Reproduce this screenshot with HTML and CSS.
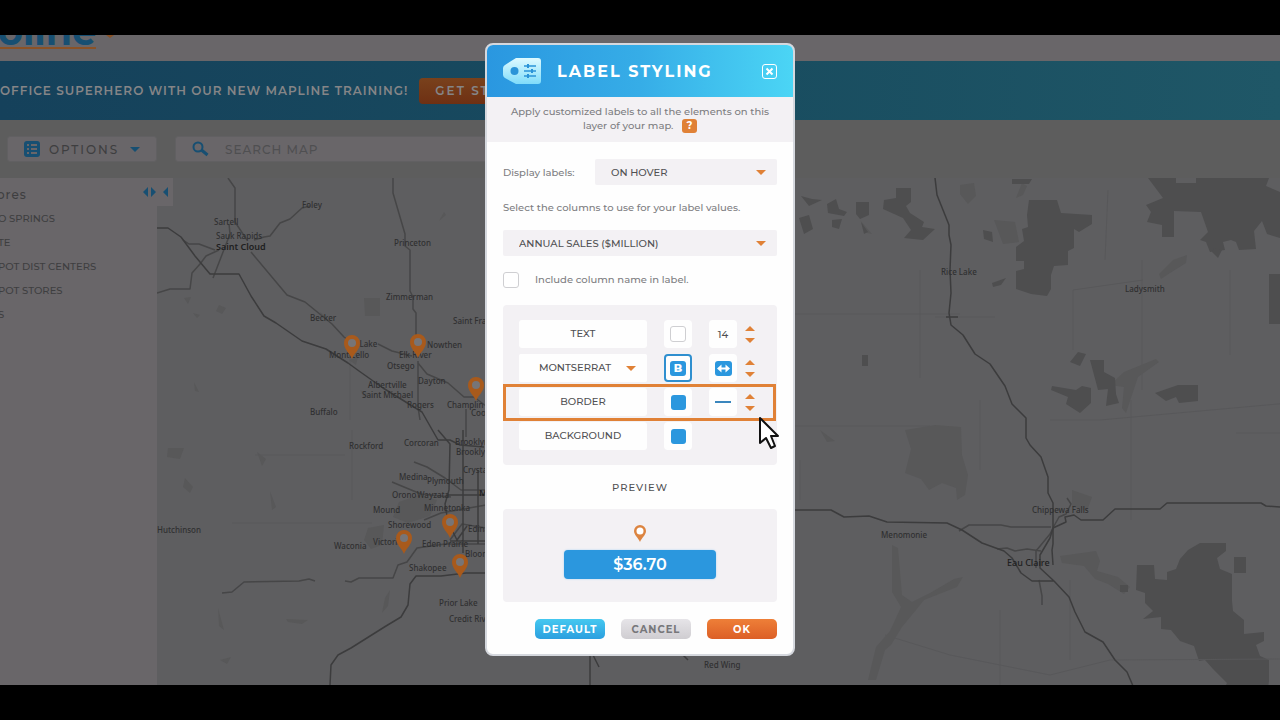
FILE: index.html
```
<!DOCTYPE html>
<html lang="en">
<head>
<meta charset="utf-8">
<meta name="viewport" content="width=device-width, initial-scale=1">
<title>Mapline - Label Styling</title>
<link rel="stylesheet" href="styles.css">
</head>
<body>
<div class="app">
	<header class="top">
		<div class="logo">oline</div>
		<span class="top-caret"></span>
	</header>

	<div class="banner">
		<span class="banner-text">OFFICE SUPERHERO WITH OUR NEW MAPLINE TRAINING!</span>
		<button type="button" class="get-started">GET STARTED</button>
	</div>

	<div class="toolbar">
		<button type="button" class="options">
			<svg width="16" height="16" viewBox="0 0 16 16"><rect width="16" height="16" rx="3" fill="#174f72"/><path d="M3 4h2M3 8h2M3 12h2M7 4h6M7 8h6M7 12h6" stroke="#696669" stroke-width="2"/></svg>
			<span>OPTIONS</span>
			<i class="caret caret-blue"></i>
		</button>
		<label class="search">
			<svg width="17" height="16" viewBox="0 0 17 16" fill="none" stroke="#174f72"><circle cx="6" cy="6" r="4.5" stroke-width="2"/><path d="M9.5 9L15.500 14" stroke-width="3"/></svg>
			<input type="text" placeholder="SEARCH MAP" aria-label="Search map">
		</label>
	</div>

	<div class="content">
		<aside class="sidebar">
			<h2>ores</h2>
			<ul>
				<li>O SPRINGS</li>
				<li>TE</li>
				<li>POT DIST CENTERS</li>
				<li>POT STORES</li>
				<li>S</li>
			</ul>
			<div class="sidebar-tab">
				<svg width="26" height="10" viewBox="0 0 26 10" fill="#174f72"><path d="M5 0v10L0 5zM8 0v10l5-5zM25 0v10l-5-5z"/></svg>
			</div>
		</aside>

		<svg class="map" viewBox="157 178 1123 507" preserveAspectRatio="xMinYMin slice" role="img" aria-label="Map">
			<defs>
				<g id="pin"><path d="M0 1C-2-5-8-8-8-15a8 8 0 0 1 16 0C8-8 2-5 0 1z" fill="#a85a1c"/><circle cy="-15" r="4" fill="#777577"/></g>
			</defs>
			<rect x="157" y="178" width="1123" height="507" fill="#5e5e60"/>

			<!-- lakes and parks -->
			<g fill="#585859">
				<path d="M364 298h16v18h-15zM219 305l7 3-4 6-6-3zM349 360l9-3-2 8zM168 448h16l-4 11-13-2zM257 452l9 7-4 7zM185 478l8 9-3 6-7-6zM270 491l6 16-4 3zM399 502l20-7 18 5-7 16-22 7-15-6zM368 528l16-3-2 20-11 4-7-9zM390 590l-2 16-6 7 3-15zM218 608l6 22-5-4zM286 619l22 1-6 4-14-2zM220 660l11-3-4 7zM194 382l5 10-4-1z"/>
				<path d="M905 430l30-5 26 2 1 28 6 20-3 20-8 5-1-12-14-5-13 7-8-11-16-6 6-24z"/>
				<path d="M892 545l6 3 4 47 10 7 18-9 24-14 9-2-6 10-33 13-8 10-14 17-11 18-6 5-9 30h-8l8-33 14-16 11-24-9-15z"/>
				<path d="M1060 556l36-5 4 10-3 10 21 6 12 10-6 7-16-10-13-5-11-13-22-3zM1072 490l20 7-5 14-15-4zM960 185l14-2 2 13-8 8-8-10zM1022 183l5 3-4 9-7 3zM1159 274l14-14 14-5-1 8-16 10-9 6zM1124 372l32-13 3 3-21 15-12 36-4-5 2-21-14-2zM994 220l21 2 4 20-16 2zM860 220l12 14-5-1zM820 430l15 11-8 1z"/>
				<path d="M360 390l9 4-5 4zM320 312l5 4-3 3zM444 212l-5 9 7-6zM184 298l7-1-3 7zM193 313l7 2-3 3z"/>
			</g>
			<g fill="#4e4e4f">
				<path d="M884 200l12-2v-10h15v14l-5 4 4 7 14 9-2 5 13 2-12 11-19-2 7-8-8-12-20-9zM856 202h13v13l-9 4-4-5zM827 204l9-5 3 10 8 3-3 4-16-3zM799 218l10-3 4 14-9 5zM832 220l10-1-3 10-7-2zM801 196l11 3 10 1-13 6zM861 222l7 10-4 2zM983 230l9 2 1 10-9-3z"/>
				<path d="M1029 200h28l4 13 31 2v9l-13 8-5-3v19l-6 3v14l-14 1-3 9v14l-4 7-16-2-15-5v-18l8-2v-8h-8v-14l8-6-2-12 6-2-1-12z"/>
				<path d="M1012 179h20l-3 5h-17zM992 283l14-5-5 7-8 2z"/>
				<path d="M1148 178h28v5h20v-5h73l-3 8 14 6v46l-13-4-5-13-8 10 2 18-17 1-3-8-5-2-8 2 2 8-15 2-4-10-6-2 8-8-7-20-27-1v26h-12v-12l-15-3 4-10-5-7 17-7z"/>
				<path d="M1214 248l8 2-4 8-6-6zM1269 274h11v50h-11z"/>
				<path d="M1070 362l8-10 8 2-6 12zM1090 360h14v12l11 6 1 16 3 9-13 3 2-17-10 1zM1052 386l24 4 6-4 9 2v15l-11 10-14-9 2-7-17-7zM1155 393l23-8h20v16l-19 2-3-6-10 4zM862 355h6v11h-6zM1234 557h12v16h-12zM1120 585h8v7h-8z"/>
				<path d="M1200 543h26v8l-9 7 3 11 12 5v27l1 10 11 9v14l20-2v9l-8 4 4 11 9 4v21l-2 14h-46l6-12-14-14-8-9-6 1-5-15-14-5-9-11-10-1v-12l-18 2 10-8-8-8v-10l-9-3 1-25h17l1 14 12 1v-8l9-3 4-10 8-9z"/>
			</g>
			<!-- minor roads -->
			<g fill="none" stroke="#58585a">
				<path d="M352 430V500M232 523h140M345 455h-90M350 340v80M790 314h170M935 317h60M920 378V270M1108 190l-3 70M1050 420h50l200-18M1142 260v130M1230 270v85M1073 350V290l70-10M790 426h140M980 400v70M1131 520V400M1236 433h44M800 460v40M885 635l65 20 100 20 60-15 170-1M1000 610v75M1070 580v80"/>
			</g>
			<!-- roads -->
			<g fill="none" stroke="#464647" stroke-width="1.500" stroke-linejoin="round">
				<path d="M228 178l7 10v34l12 18M254 240l10-3 6-1 10-13 10-4 12-11 8-2M213 278l17-44-1-10M157 293l13-4h20l2-16 8-9 6-8 13-6M183 240l6 4h10l16 6"/>
				<path d="M251 252l36 43 18 7 27 22 12 13 10 7M378 344l14 7 20 5M393 178v15l12 41v12l5 4v41l3 6v12l3 4v35M418 361v46l2 13M418 363l9 11 21 9 16 14h10l12 9M466 409v28"/>
				<path d="M222 593l10-1 12-10 55-1 10-2 6 2M345 581l6 1 8-4h34l5-13 9-3 10-14 28-4h43M414 462l13 5 18 11 16 12h25M392 482l12 5 17 7 30 3"/>
				<path d="M424 520l17-7 28-5 17-3M450 540l12-16 24 4M959 531l10-6h32l10 2h40M1067 498l4 6-5 10-7 3-5 9-4 8-14 17v17M997 549l10-1 8 3 12-2 14 2M1039 580l3 16v9"/>
			</g>
			<g fill="none" stroke="#3c3c3d" stroke-width="1.500" stroke-linejoin="round">
				<path d="M157 228h11l13 9 14 19 15 18h29l12 22 13 20 12 7 26 18 24 8 22 14 11 8 24 17 39 24 8 14 8 14h12l10 5 24 2"/>
				<path d="M438 430l12 14-1 46-4 14 3 18 9 18 10-14M463 430v123M478 470v74M446 495h40M330 685l1-20 7-10 13-7 35-22 15-9 7-12 2-21 6-8h25l25-3h20M450 541h36"/>
				<path d="M935 178l2 17 12 30v10l2 10-1 25 1 23-2 20 2 12 12 10 12 19 15 10 15 22 7 18 14 14v20l4 7 11 12 7 20v16l5 10v41l-1 6 1 15M946 317h12"/>
				<path d="M795 510h36l13 7 25-1 18 6 60 1 15 7 20 13 22 8 8 7 9 15 11 8h22M1053 528l13-6-1-5 9-2 7 5h22l12-11h45l7-6h94l5 3 14 1M1053 528l-3 10-10 17v13l14 13 15 16 6 15 10 20 18 10 12 18 12 12 6 14"/>
				<path d="M590 655v30M593 655l6 12M683 655l5 5"/>
			</g>
			<!-- towns -->
			<g class="towns">
				<text x="302" y="208">Foley</text><text x="214" y="225">Sartell</text><text x="216" y="239">Sauk Rapids</text><text class="city" x="216" y="250">Saint Cloud</text>
				<text x="394" y="246">Princeton</text><text x="386" y="300">Zimmerman</text><text x="310" y="321">Becker</text><text x="453" y="324">Saint Francis</text>
				<text x="345" y="347">Big Lake</text><text x="427" y="348">Nowthen</text><text x="329" y="358">Monticello</text><text x="399" y="358">Elk River</text><text x="387" y="369">Otsego</text><text x="418" y="384">Dayton</text><text x="368" y="388">Albertville</text><text x="362" y="398">Saint Michael</text><text x="407" y="408">Rogers</text><text x="447" y="408">Champlin</text><text x="471" y="416">Coon Rapids</text><text x="310" y="415">Buffalo</text>
				<text x="349" y="449">Rockford</text><text x="404" y="446">Corcoran</text><text x="455" y="445">Brooklyn Park</text><text x="456" y="455">Brooklyn Center</text><text x="463" y="473">Crystal</text><text x="399" y="480">Medina</text><text x="427" y="484">Plymouth</text><text class="city" x="479" y="496">Minneapolis</text><text x="392" y="498">Orono</text><text x="417" y="498">Wayzata</text><text x="373" y="513">Mound</text><text x="424" y="511">Minnetonka</text><text x="388" y="528">Shorewood</text><text x="468" y="532">Edina</text><text x="157" y="533">Hutchinson</text><text x="334" y="549">Waconia</text><text x="373" y="545">Victoria</text><text x="422" y="547">Eden Prairie</text><text x="465" y="557">Bloomington</text><text x="409" y="571">Shakopee</text><text x="439" y="606">Prior Lake</text><text x="449" y="622">Credit River</text><text x="704" y="668">Red Wing</text>
				<text x="941" y="275">Rice Lake</text><text x="1125" y="292">Ladysmith</text><text x="1032" y="513">Chippewa Falls</text><text x="881" y="538">Menomonie</text><text class="city light" x="1007" y="566">Eau Claire</text>
			</g>
			<use href="#pin" x="352" y="358"/><use href="#pin" x="418" y="357"/><use href="#pin" x="476" y="400"/>
			<use href="#pin" x="450" y="537"/><use href="#pin" x="404" y="553"/><use href="#pin" x="460" y="577"/>
		</svg>
	</div>
</div>

<div class="overlay">
<form class="dialog" role="dialog" aria-labelledby="title">
	<div class="dialog-head">
		<svg width="38" height="26" viewBox="0 0 38 26">
			<defs><linearGradient id="tag" x2="0" y2="1"><stop stop-color="#dffaff"/><stop offset="1" stop-color="#7fdcfa"/></linearGradient></defs>
			<path d="M13 0h22a3 3 0 0 1 3 3v20a3 3 0 0 1-3 3H13L2 20a4 4 0 0 1-2-3V10a4 4 0 0 1 2-3z" fill="url(#tag)"/>
			<circle cx="11.500" cy="13" r="4" fill="#2b94d8"/>
			<path d="M21 8h12M21 13h12M21 18h12" stroke="#2b94d8" stroke-width="1.500"/>
			<path d="M25 6v4M29 11v4M25 16v4" stroke="#2b94d8" stroke-width="2"/>
		</svg>
		<h1 id="title">LABEL STYLING</h1>
		<button type="button" class="close" aria-label="Close"><svg width="15" height="15" viewBox="0 0 15 15" fill="none" stroke="#fff"><rect x=".5" y=".5" width="14" height="14" rx="2.500"/><path d="M4.500 4.500l6 6M10.500 4.500l-6 6" stroke-width="2"/></svg></button>
	</div>
	<p class="intro">Apply customized labels to all the elements on this layer of your map. <button type="button" class="help" aria-label="Help">?</button></p>

	<div class="dialog-body">
		<div class="field">
			<label for="show">Display labels:</label>
			<div class="drop">
				<select id="show"><option>ON HOVER</option></select>
				<i class="caret"></i>
			</div>
		</div>
		<label class="hint" for="column">Select the columns to use for your label values.</label>
		<div class="drop">
			<select id="column"><option>ANNUAL SALES ($MILLION)</option></select>
			<i class="caret"></i>
		</div>
		<label class="check"><input type="checkbox"> Include column name in label.</label>

		<div class="panel">
			<div class="row">
				<span class="name">TEXT</span>
				<button type="button" class="cell" aria-label="Text color"><i class="swatch white"></i></button>
				<input type="text" class="cell size" value="14" aria-label="Text size">
				<div class="step"><button type="button" class="up" aria-label="Larger"></button><button type="button" class="down" aria-label="Smaller"></button></div>
			</div>
			<div class="row">
				<div class="drop font">
					<select aria-label="Font"><option>MONTSERRAT</option></select>
					<i class="caret"></i>
				</div>
				<button type="button" class="cell bold" aria-label="Bold"><i class="letter">B</i></button>
				<span class="cell"><svg width="17" height="15" viewBox="0 0 17 15"><rect width="17" height="15" rx="3" fill="#2b97de"/><path d="M2 7.500L6.500 3.500v3h4v-3L15 7.500l-4.500 4v-3h-4v3z" fill="#fff"/></svg></span>
				<div class="step"><button type="button" class="up" aria-label="Wider"></button><button type="button" class="down" aria-label="Narrower"></button></div>
			</div>
			<div class="row marked">
				<span class="name">BORDER</span>
				<button type="button" class="cell" aria-label="Border color"><i class="swatch"></i></button>
				<span class="cell"><i class="line"></i></span>
				<div class="step"><button type="button" class="up" aria-label="Thicker"></button><button type="button" class="down" aria-label="Thinner"></button></div>
				<svg class="cursor" width="22" height="34" viewBox="0 0 22 34"><path d="M2 2v25l6-5 5 10 4-2-4-10h7z" fill="#fff" stroke="#111" stroke-width="2" stroke-linejoin="round"/></svg>
			</div>
			<div class="row">
				<span class="name">BACKGROUND</span>
				<button type="button" class="cell" aria-label="Background color"><i class="swatch"></i></button>
			</div>
		</div>

		<h3>PREVIEW</h3>
		<div class="preview">
			<svg width="12" height="17" viewBox="0 0 12 17"><path d="M6 17C4.500 13 0 10 0 6a6 6 0 0 1 12 0c0 4-4.500 7-6 11z" fill="#dc8440"/><circle cx="6" cy="6" r="3.500" fill="#fff"/></svg>
			<div class="tip">$36.70</div>
		</div>
		<div class="actions">
			<button type="button" class="btn blue">DEFAULT</button>
			<button type="button" class="btn gray">CANCEL</button>
			<button type="submit" class="btn orange">OK</button>
		</div>
	</div>
</form>
</div>
</body>
</html>
```
FILE: styles.css
```
*
{
	box-sizing:border-box;
}
body
{
	margin:0;
	background:#000;
	font-family:Montserrat, Inter, sans-serif;
	font-size:10px;
	font-weight:500;
	color:#505052;
}
button, input, select
{
	font:inherit;
	color:inherit;
	margin:0;
	padding:0;
	border:none;
	background:none;
}
svg
{
	display:block;
}
h1, h2, h3, p, ul
{
	margin:0;
	padding:0;
}

/* page behind the dialog */
.app
{
	height:100vh;
	padding:35px 0;
	display:flex;
	flex-direction:column;
	overflow:hidden;
	color:#3e3e40;
}
.top
{
	flex:none;
	height:26px;
	display:flex;
	align-items:flex-end;
	gap:10px;
	padding-bottom:12px;
	background:#696669;
	overflow:hidden;
}
.logo
{
	margin-left:-2px;
	border-bottom:2px solid #8a5226;
	color:#174f72;
	font-size:38px;
	font-weight:700;
	line-height:30px;
}
.top-caret
{
	align-self:flex-start;
	border:4px solid transparent;
	border-top:3px solid #8a5226;
	border-bottom:none;
}
.banner
{
	flex:none;
	height:59px;
	display:flex;
	align-items:center;
	gap:11px;
	white-space:nowrap;
	background:linear-gradient(90deg, #15415b, #194d60 60%, #1f5767);
	color:#858587;
	font-size:12px;
	font-weight:600;
	letter-spacing:1px;
}
.get-started
{
	height:26px;
	padding:0 16px;
	border-radius:4px;
	background:linear-gradient(#79411c, #6e3013);
	letter-spacing:2px;
}
.toolbar
{
	flex:none;
	height:58px;
	display:flex;
	align-items:center;
	gap:18px;
	padding:0 7px;
	background:#5d5d5d;
}
.options, .search
{
	height:26px;
	display:flex;
	align-items:center;
	padding:0 16px;
	border:1px solid #616062;
	border-radius:3px;
	background:#696669;
}
.options
{
	width:150px;
	gap:9px;
	font-size:12px;
	letter-spacing:2px;
}
.options span
{
	flex:1;
	text-align:left;
}
.search
{
	width:400px;
	gap:16px;
}
.search input
{
	flex:1;
	font-size:12px;
	letter-spacing:1px;
	outline:none;
}
.search input::placeholder
{
	color:#4f4f51;
}
.content
{
	flex:1;
	min-height:0;
	display:flex;
	background:#5e5e60;
}
.sidebar
{
	flex:none;
	position:relative;
	width:157px;
	background:#696669;
}
.sidebar h2
{
	margin-left:-3px;
	padding-top:8px;
	font-size:12px;
	font-weight:500;
	line-height:18px;
	letter-spacing:1px;
}
.sidebar ul
{
	padding-top:3px;
	list-style:none;
}
.sidebar li
{
	margin-left:-2px;
	line-height:24px;
}
.sidebar-tab
{
	position:absolute;
	top:0;
	right:-16px;
	padding:9px 4px;
	background:#696669;
}
.map
{
	flex:1;
	min-width:0;
	height:100%;
}
.towns
{
	font-family:"Noto Sans", sans-serif;
	font-size:8px;
	fill:#303031;
}
.towns .city
{
	font-size:9px;
	font-weight:600;
	fill:#202021;
}
.towns .light
{
	font-weight:500;
}

/* dialog */
.overlay
{
	position:absolute;
	top:0;
	left:0;
	right:0;
	display:flex;
	justify-content:center;
	padding-top:43px;
}
.dialog
{
	width:310px;
	border:2px solid #d5d8de;
	border-radius:8px;
	background:#fefefe;
	overflow:hidden;
}
.dialog-head
{
	height:52px;
	display:flex;
	align-items:center;
	gap:16px;
	padding:0 16px;
	background:linear-gradient(90deg, #2a97e0, #36ade7 50%, #4bd5f5);
	color:#fff;
}
.dialog-head h1
{
	flex:1;
	font-size:16px;
	font-weight:700;
	letter-spacing:2px;
	white-space:nowrap;
}
.intro
{
	padding:8px 16px 9px;
	background:#f3f1f4;
	color:#7d7d81;
	line-height:14px;
	text-align:center;
}
.help
{
	width:15px;
	height:14px;
	margin-left:6px;
	border-radius:3px;
	background:#e08136;
	color:#fff;
	font-weight:700;
	line-height:14px;
}
.dialog-body
{
	padding:17px 16px 15px;
	color:#7d7d81;
}
.field
{
	display:flex;
	align-items:center;
	justify-content:space-between;
}
.field .drop
{
	width:182px;
}
.drop
{
	position:relative;
	height:26px;
}
.drop select
{
	width:100%;
	height:100%;
	padding:0 16px;
	appearance:none;
	border-radius:2px;
	background:#f3f1f4;
	color:#505052;
}
.caret
{
	border:5px solid transparent;
	border-top-color:#e08136;
	border-bottom:none;
}
.caret-blue
{
	border-top-color:#174f72;
}
.drop .caret
{
	position:absolute;
	top:11px;
	right:11px;
	pointer-events:none;
}
.hint
{
	display:block;
	padding:15px 0;
	line-height:15px;
}
.check
{
	display:flex;
	align-items:center;
	gap:16px;
	padding:16px 0 17px;
	line-height:16px;
}
.check input
{
	width:16px;
	height:16px;
	appearance:none;
	border:1px solid #cfcfd2;
	border-radius:3px;
	background:#fff;
}
.panel
{
	display:flex;
	flex-direction:column;
	gap:6px;
	padding:15px 16px;
	border-radius:4px;
	background:#f3f1f4;
	color:#505052;
}
.row
{
	position:relative;
	display:flex;
	align-items:center;
	gap:17px;
	height:28px;
}
.name, .font
{
	width:128px;
	height:28px;
	border-radius:3px;
	background:#fefefe;
	line-height:28px;
	text-align:center;
}
.font select
{
	padding:0 32px 0 16px;
	background:#fefefe;
	text-align:center;
}
.font .caret
{
	top:12px;
}
.cell
{
	width:28px;
	height:28px;
	display:flex;
	align-items:center;
	justify-content:center;
	border-radius:4px;
	background:#fefefe;
}
.size
{
	text-align:center;
}
.bold
{
	border:2px solid #2f8fcf;
}
.letter
{
	width:16px;
	height:15px;
	border-radius:3px;
	background:#2b97de;
	color:#fff;
	font-size:11px;
	font-style:normal;
	font-weight:800;
	line-height:15px;
	text-align:center;
}
.swatch
{
	width:15px;
	height:15px;
	border-radius:3px;
	background:#2b97de;
}
.swatch.white
{
	width:16px;
	height:16px;
	border:1px solid #cfcfd2;
	background:#fff;
}
.line
{
	width:16px;
	height:2px;
	background:#3a86bd;
}
.step
{
	display:flex;
	flex-direction:column;
	gap:7px;
	margin-left:-9px;
}
.up, .down
{
	border:5px solid transparent;
}
.up
{
	border-top:none;
	border-bottom-color:#e08136;
}
.down
{
	border-bottom:none;
	border-top-color:#e08136;
}
/* callout frame around the border settings */
.marked::after
{
	content:"";
	position:absolute;
	inset:-4px -15px -5px -16px;
	border:3px solid #e08136;
}
.cursor
{
	position:absolute;
	z-index:1;
	top:28px;
	right:-19px;
}
.dialog h3
{
	padding:15px 0 14px;
	color:#505052;
	font-size:10px;
	font-weight:500;
	line-height:15px;
	letter-spacing:1px;
	text-align:center;
}
.preview
{
	display:flex;
	flex-direction:column;
	align-items:center;
	gap:8px;
	padding:16px 61px 23px;
	border-radius:4px;
	background:#f3f1f4;
}
.tip
{
	width:100%;
	border-radius:4px;
	background:#2b97de;
	box-shadow:0 0 2px #9fd0f2;
	color:#fff;
	font-size:16px;
	font-weight:600;
	line-height:29px;
	text-align:center;
}
.actions
{
	display:flex;
	justify-content:flex-end;
	gap:16px;
	padding-top:17px;
}
.btn
{
	width:70px;
	height:20px;
	border-radius:5px;
	color:#fff;
	font-weight:700;
	letter-spacing:1px;
}
.btn.blue
{
	background:linear-gradient(#45c8f0, #2b9fdf);
}
.btn.gray
{
	background:linear-gradient(#e6e4e8, #cfcdd1);
	color:#77777a;
}
.btn.orange
{
	background:linear-gradient(#ee7f38, #dc5f26);
}
```
